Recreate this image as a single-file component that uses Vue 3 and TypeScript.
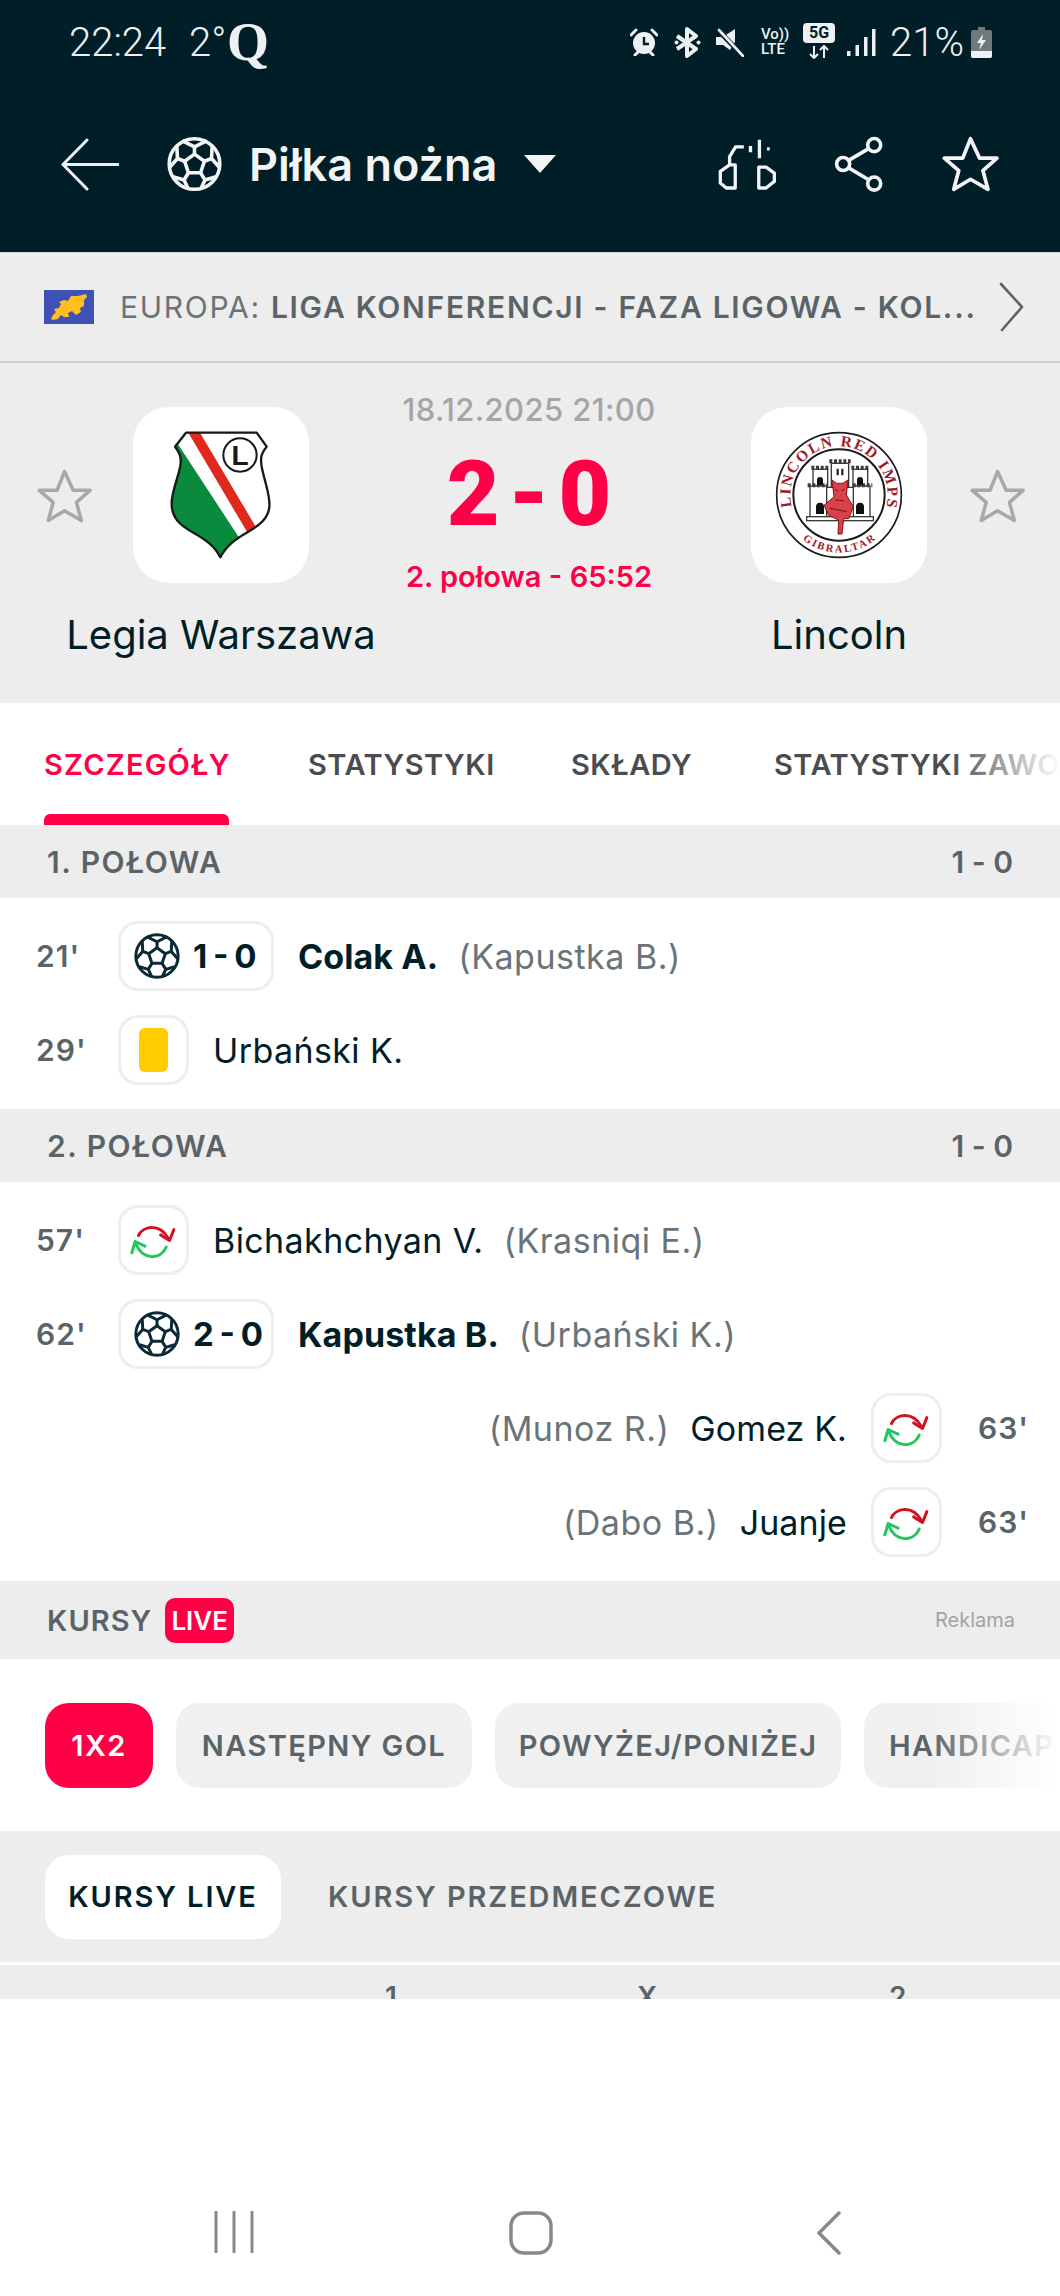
<script setup lang="ts">
type Side = 'left' | 'right'
type Kind = 'goal' | 'card' | 'sub'
interface MatchEvent { time: string; kind: Kind; side: Side; name: string; assist?: string; score?: string }
interface Section { title: string; score: string; events: MatchEvent[] }

const sections: Section[] = [
  {
    title: '1. POŁOWA',
    score: '1 - 0',
    events: [
      { time: "21'", kind: 'goal', side: 'left', score: '1 - 0', name: 'Colak A.', assist: '(Kapustka B.)' },
      { time: "29'", kind: 'card', side: 'left', name: 'Urbański K.' },
    ],
  },
  {
    title: '2. POŁOWA',
    score: '1 - 0',
    events: [
      { time: "57'", kind: 'sub', side: 'left', name: 'Bichakhchyan V.', assist: '(Krasniqi E.)' },
      { time: "62'", kind: 'goal', side: 'left', score: '2 - 0', name: 'Kapustka B.', assist: '(Urbański K.)' },
      { time: "63'", kind: 'sub', side: 'right', name: 'Gomez K.', assist: '(Munoz R.)' },
      { time: "63'", kind: 'sub', side: 'right', name: 'Juanje', assist: '(Dabo B.)' },
    ],
  },
]
const markets: string[] = ['NASTĘPNY GOL', 'POWYŻEJ/PONIŻEJ', 'HANDICAP']
</script>

<template>
  <div class="page">
    <svg class="defs" aria-hidden="true">
      <symbol id="ball" viewBox="0 0 100 100">
        <g fill="none" stroke="currentColor" stroke-width="6.500" stroke-linejoin="round" stroke-linecap="round">
          <circle cx="50" cy="50" r="46" />
          <path d="M50 32 68 45 61 66H39L32 45Z" />
          <path d="M50 32V19M68 45 81 40M61 66 69 79M39 66 31 79M32 45 19 40" />
          <path d="M30 9 50 19 70 9M81 40 82 19M81 40 95 56M69 79 86 74M69 79 62 94M31 79 38 94M31 79 14 74M19 40 5 56M19 40 18 19" />
        </g>
      </symbol>
      <symbol id="star" viewBox="0 0 170 165">
        <path d="M85 7 112 65 164 65 122 102 137 158 85 128 35 158 50 102 7 65 62 65Z" fill="none" stroke="currentColor" stroke-width="11" stroke-linejoin="round" />
      </symbol>
      <symbol id="sub" viewBox="60 80 150 130">
        <g fill="none" stroke-width="9" stroke-linecap="round" stroke-linejoin="round">
          <path d="M88 130C100 103 150 90 178 138" stroke="#d2131f" />
          <path d="M155 128 182 145 195 112" stroke="#d2131f" />
          <path d="M172 165C155 205 100 205 80 155" stroke="#22c55e" />
          <path d="M68 182 78 148 108 162" stroke="#22c55e" />
        </g>
      </symbol>
    </svg>

    <header class="top">
      <div class="status">
        <span class="clock">22:24</span>
        <span class="temp">2°</span>
        <span class="q">Q</span>
        <span class="status-spacer"></span>
        <svg class="s-alarm" width="28" height="28" viewBox="0 0 28 28">
          <circle cx="14" cy="15" r="11" fill="#eef1f3" />
          <path d="M14 9v7h5" fill="none" stroke="#001e28" stroke-width="2.4" />
          <path d="M1 7 6 2M27 7 22 2M5 27l3-3M23 27l-3-3" stroke="#eef1f3" stroke-width="3" stroke-linecap="round" />
        </svg>
        <svg class="s-bt" width="27" height="31" viewBox="0 0 27 31">
          <path d="M3 9 22 22 13 29V2L22 9 3 22" fill="none" stroke="#eef1f3" stroke-width="4" stroke-linejoin="round" />
          <circle cx="2.500" cy="15.500" r="2" fill="#eef1f3" />
          <circle cx="24.500" cy="15.500" r="2" fill="#eef1f3" />
        </svg>
        <svg class="s-mute" width="29" height="29" viewBox="0 0 29 29">
          <path d="M1 9H8L20 1V14L15 22 8 17H1Z" fill="#eef1f3" />
          <path d="M2 1 28 28" stroke="#001e28" stroke-width="5" />
          <path d="M4 2 28 28" stroke="#eef1f3" stroke-width="2.600" stroke-linecap="round" />
        </svg>
        <span class="s-volte"><span>Vo))</span><span>LTE</span></span>
        <span class="s-5g"><span class="s-5g-box">5G</span>
          <svg width="22" height="14" viewBox="0 0 22 14">
            <path d="M6 1v12M2 9l4 4 4-4M16 13V1M12 5l4-4 4 4" fill="none" stroke="#eef1f3" stroke-width="2" />
          </svg>
        </span>
        <svg class="s-signal" width="29" height="29" viewBox="0 0 29 29">
          <rect x="0" y="23" width="3.500" height="5" fill="#eef1f3" />
          <rect x="8.500" y="17" width="3.500" height="11" fill="#eef1f3" />
          <rect x="17" y="9" width="3.500" height="19" fill="#eef1f3" />
          <rect x="25" y="1" width="3.500" height="27" fill="#eef1f3" />
        </svg>
        <span class="pct">21%</span>
        <svg class="s-batt" width="21" height="31" viewBox="0 0 21 31">
          <path d="M7 0h7v3h5a2 2 0 0 1 2 2v24a2 2 0 0 1-2 2H2a2 2 0 0 1-2-2V5a2 2 0 0 1 2-2h5Z" fill="#6f787d" />
          <path d="M0 24H21V29a2 2 0 0 1-2 2H2a2 2 0 0 1-2-2Z" fill="#eef1f3" />
          <path d="M12 7 6 16H10L8 23 15 13H11Z" fill="#eef1f3" />
        </svg>
      </div>
      <nav class="bar">
        <svg class="back" width="59" height="53" viewBox="0 0 59 53">
          <path d="M27 2 3 26.500 27 51M3 26.500H58" fill="none" stroke="#eef1f3" stroke-width="3" stroke-linecap="round" stroke-linejoin="round" />
        </svg>
        <svg class="title-ball" width="55" height="56"><use href="#ball" /></svg>
        <span class="title">Piłka nożna</span>
        <span class="caret"></span>
        <span class="bar-spacer"></span>
        <svg class="act-lineup" width="58" height="52" viewBox="360 410 175 155">
          <path d="M395 490V465L413 436H438M458 433V452M485 414V470M508 442H516M395 490 367 510V545L385 560H412V490ZM483 497V560H505L530 540V515L505 497Z" fill="none" stroke="#f2f4f5" stroke-width="10" stroke-linejoin="round" />
        </svg>
        <svg class="act-share" width="49" height="56" viewBox="705 408 150 170">
          <g fill="none" stroke="#f2f4f5" stroke-width="11">
            <circle cx="828" cy="435" r="20" />
            <circle cx="733" cy="493" r="20" />
            <circle cx="828" cy="553" r="20" />
            <path d="M750 482 811 446M750 505 811 541" />
          </g>
        </svg>
        <svg class="act-star" width="57" height="56"><use href="#star" /></svg>
      </nav>
    </header>

    <div class="crumb">
      <svg class="flag" width="50" height="34" viewBox="0 0 50 34">
        <rect width="50" height="34" fill="#3f51b5" />
        <path d="M7 29 9 25 12 22 10 19 15 18 17 14 15 12 20 10 24 11 27 6 34 6 38 5 42 4 43 7 40 10 40 16 36 18 37 22 32 25 28 21 24 23 25 27 20 27 17 25 14 29 9 30Z" fill="#ffc01f" />
      </svg>
      <span class="crumb-text">EUROPA: <b>LIGA KONFERENCJI - FAZA LIGOWA - KOL...</b></span>
      <svg class="crumb-chev" width="25" height="50" viewBox="0 0 25 50">
        <path d="M2 2 23 25 3 48" fill="none" stroke="#5a6468" stroke-width="2.600" stroke-linecap="round" stroke-linejoin="round" />
      </svg>
    </div>

    <section class="match">
      <svg class="fav" width="55" height="54"><use href="#star" /></svg>
      <div class="team">
        <div class="logo">
          <svg width="176" height="176" viewBox="39 51 528 528">
            <defs>
              <clipPath id="shield">
                <path d="M198 128H410L440 170C425 190 420 200 425 230 435 280 452 320 448 350 445 385 420 405 385 425 350 445 320 465 301 502 285 470 260 450 215 425 180 405 155 385 155 340 155 300 180 250 182 220 184 195 175 185 165 170Z" />
              </clipPath>
            </defs>
            <g clip-path="url(#shield)">
              <rect x="150" y="120" width="310" height="390" fill="#fff" />
              <path d="M150 150 172 160 362 450 300 510H150Z" fill="#0a8a3c" />
              <path d="M205 128H240L410 415 385 432Z" fill="#e0281c" />
            </g>
            <path d="M198 128H410L440 170C425 190 420 200 425 230 435 280 452 320 448 350 445 385 420 405 385 425 350 445 320 465 301 502 285 470 260 450 215 425 180 405 155 385 155 340 155 300 180 250 182 220 184 195 175 185 165 170Z" fill="none" stroke="#16181a" stroke-width="7" stroke-linejoin="round" />
            <circle cx="360" cy="195" r="50" fill="#fff" stroke="#16181a" stroke-width="6" />
            <text x="360" y="224" class="crest-l">L</text>
          </svg>
        </div>
        <div class="team-name">Legia Warszawa</div>
      </div>
      <div class="center">
        <div class="date">18.12.2025 21:00</div>
        <div class="score">2-0</div>
        <div class="live">2. połowa - 65:52</div>
      </div>
      <div class="team team-right">
        <div class="logo">
          <svg width="176" height="176" viewBox="33 21 528 528">
            <defs>
              <path id="ring-top" d="M160 335A146 146 0 1 1 434 335" />
              <path id="ring-bot" d="M186 417A172 172 0 0 0 408 417" />
            </defs>
            <circle cx="297" cy="285" r="187" fill="#fff" stroke="#1a1a1a" stroke-width="5" />
            <circle cx="297" cy="285" r="137" fill="#fff" stroke="#1a1a1a" stroke-width="6" />
            <text class="ring-text"><textPath href="#ring-top" startOffset="50%" text-anchor="middle" textLength="530">LINCOLN RED IMPS</textPath></text>
            <text class="ring-sub"><textPath href="#ring-bot" startOffset="50%" text-anchor="middle" textLength="236">GIBRALTAR</textPath></text>
            <g fill="#fff" stroke="#3a3a3a" stroke-width="4">
              <rect x="274" y="190" width="52" height="70" />
              <rect x="219" y="208" width="44" height="50" />
              <rect x="339" y="208" width="44" height="50" />
              <rect x="258" y="262" width="84" height="90" />
              <rect x="210" y="258" width="50" height="92" />
              <rect x="340" y="258" width="50" height="92" />
              <rect x="200" y="350" width="200" height="12" />
            </g>
            <g stroke="#3a3a3a" fill="none" stroke-width="12" stroke-dasharray="9 5">
              <path d="M268 184H332M214 203H268M334 203H388M203 256H262M338 256H397" />
            </g>
            <path d="M228 342V320a12 12 0 0 1 24 0V342ZM348 342V320a12 12 0 0 1 24 0V342ZM231 255V240a9 9 0 0 1 18 0V255ZM351 255V240a9 9 0 0 1 18 0V255ZM290 226V206H296V226ZM304 226V206H310V226Z" fill="#111" />
            <path d="M276 240 290 250H308L324 240 319 285 340 320 326 356H311L306 402 294 402 296 360 266 346 252 316 282 290Z" fill="#d9414b" stroke="#8c0f18" stroke-width="3" />
            <path d="M285 268 293 272M305 272 313 268M286 300 312 302M270 325 320 335" stroke="#7a0d15" stroke-width="3" />
          </svg>
        </div>
        <div class="team-name">Lincoln</div>
      </div>
      <svg class="fav" width="55" height="54"><use href="#star" /></svg>
    </section>

    <div class="tabs">
      <span class="tab tab-on">SZCZEGÓŁY</span>
      <span class="tab">STATYSTYKI</span>
      <span class="tab">SKŁADY</span>
      <span class="tab">STATYSTYKI ZAWODNIKÓW</span>
      <span class="tabs-fade"></span>
    </div>

    <template v-for="s in sections" :key="s.title">
      <div class="sec-head"><span>{{ s.title }}</span><span class="sec-score">{{ s.score }}</span></div>
      <div class="events">
        <div v-for="(e, i) in s.events" :key="i" class="row" :class="'row-' + e.side">
          <span class="time">{{ e.time }}</span>
          <span class="badge" :class="{ 'badge-goal': e.kind === 'goal' }">
            <template v-if="e.kind === 'goal'">
              <svg class="badge-ball" width="46" height="46"><use href="#ball" /></svg>
              <span class="badge-score">{{ e.score }}</span>
            </template>
            <span v-else-if="e.kind === 'card'" class="card"></span>
            <svg v-else width="50" height="43"><use href="#sub" /></svg>
          </span>
          <span class="who" :class="{ scorer: e.kind === 'goal' }">{{ e.name }}</span>
          <span v-if="e.assist" class="assist">{{ e.assist }}</span>
        </div>
      </div>
    </template>

    <div class="odds-head">
      <span class="odds-title">KURSY</span>
      <span class="live-tag">LIVE</span>
      <span class="ad">Reklama</span>
    </div>
    <div class="pills">
      <span class="pill pill-on">1X2</span>
      <span v-for="m in markets" :key="m" class="pill">{{ m }}</span>
      <span class="pills-fade"></span>
    </div>
    <div class="switch">
      <span class="sw sw-on">KURSY LIVE</span>
      <span class="sw">KURSY PRZEDMECZOWE</span>
    </div>
    <div class="cols"><span>1</span><span>X</span><span>2</span></div>

    <footer class="sysnav">
      <svg width="40" height="42" viewBox="0 0 40 42">
        <path d="M2 1V41M20 1V41M38 1V41" stroke="#85898c" stroke-width="3" stroke-linecap="round" />
      </svg>
      <svg class="sys-home" width="44" height="44" viewBox="0 0 44 44">
        <rect x="2" y="2" width="40" height="40" rx="13" fill="none" stroke="#85898c" stroke-width="3.500" />
      </svg>
      <svg width="26" height="44" viewBox="0 0 26 44">
        <path d="M23 2 3 22 23 42" fill="none" stroke="#85898c" stroke-width="3.500" stroke-linecap="round" stroke-linejoin="round" />
      </svg>
    </footer>
  </div>
</template>

<style>
html, body { margin: 0; background: #fff; }
</style>

<style scoped>
.page { width: 1060px; height: 2296px; overflow: hidden; display: flex; flex-direction: column; font-family: Inter, "Noto Sans", sans-serif; color: #001e28; background: #fff; }
.defs { position: absolute; width: 0; height: 0; }

.top { height: 252px; background: #001e28; color: #eef1f3; flex: none; }
.status { height: 84px; display: flex; align-items: center; padding: 0 68px 0 69px; font-family: Roboto, sans-serif; font-weight: 300; font-size: 40px; }
.clock { width: 120px; }
.temp { width: 38px; }
.q { font-family: "Liberation Serif", serif; font-weight: 700; font-size: 54px; line-height: 1; }
.status-spacer { flex: 1; }
.status svg { flex: none; }
.s-bt { margin-left: 16px; }
.s-mute { margin-left: 14px; }
.s-volte { margin-left: 17px; width: 30px; display: flex; flex-direction: column; font-family: Roboto, sans-serif; font-weight: 500; font-size: 15px; line-height: 15px; }
.s-5g { margin-left: 12px; width: 32px; display: flex; flex-direction: column; align-items: center; margin-top: -3px; }
.s-5g-box { width: 32px; height: 20px; background: #eef1f3; color: #001e28; border-radius: 4px; font-size: 16px; line-height: 20px; font-weight: 700; text-align: center; margin-bottom: 2px; }
.s-signal { margin-left: 12px; }
.pct { margin-left: 14px; width: 74px; }
.s-batt { margin-left: 7px; }

.bar { height: 168px; margin-top: -4px; display: flex; align-items: center; padding: 0 61px 0 60px; box-sizing: border-box; }
.back { flex: none; }
.title-ball { margin-left: 48px; flex: none; color: #f2f4f5; }
.title { margin-left: 27px; font-size: 45px; font-weight: 600; color: #f2f4f5; white-space: nowrap; }
.caret { margin-left: 27px; width: 0; height: 0; border-left: 16px solid transparent; border-right: 16px solid transparent; border-top: 18px solid #f2f4f5; }
.bar-spacer { flex: 1; }
.act-lineup { flex: none; }
.act-share { margin-left: 58px; flex: none; }
.act-star { margin-left: 59px; flex: none; color: #f2f4f5; }

.crumb { height: 111px; box-sizing: border-box; flex: none; background: #ededed; border-top: 1px solid #cfdbe0; border-bottom: 2px solid #cfcfcf; display: flex; align-items: center; padding: 0 36px 0 44px; }
.flag { flex: none; }
.crumb-text { margin-left: 26px; font-size: 30px; letter-spacing: 1.7px; color: #6a7478; white-space: nowrap; flex: 1; overflow: hidden; }
.crumb-text b { font-weight: 600; color: #5a6468; }
.crumb-chev { flex: none; }

.match { height: 340px; box-sizing: border-box; flex: none; background: #ededed; display: flex; align-items: flex-start; padding: 44px 35px 0 37px; color: #a8a8a8; }
.fav { margin-top: 62px; flex: none; }
.team { width: 258px; display: flex; flex-direction: column; align-items: center; flex: none; }
.team-right { width: 262px; }
.logo { width: 176px; height: 176px; background: #fff; border-radius: 36px; overflow: hidden; }
.logo svg { display: block; }
.crest-l { font-family: "Liberation Sans", sans-serif; font-weight: 700; font-size: 84px; text-anchor: middle; fill: #16181a; }
.ring-text { font-family: "Liberation Serif", serif; font-weight: 700; font-size: 46px; fill: #a11a22; }
.ring-sub { font-family: "Liberation Serif", serif; font-weight: 700; font-size: 32px; fill: #a11a22; }
.team-name { margin-top: 28px; font-size: 40px; line-height: 48px; color: #001e28; white-space: nowrap; }
.center { flex: 1; display: flex; flex-direction: column; align-items: center; }
.date { margin-top: -17px; font-size: 31px; line-height: 40px; font-weight: 500; letter-spacing: .4px; color: #a5a5a5; white-space: nowrap; }
.score { margin-top: 22px; font-family: Roboto, sans-serif; font-size: 91px; line-height: 84px; font-weight: 900; color: #ff0046; letter-spacing: 9px; padding-left: 9px; }
.live { margin-top: 21px; font-size: 29px; line-height: 40px; font-weight: 600; color: #ff0046; white-space: nowrap; }

.tabs { position: relative; height: 122px; flex: none; display: grid; grid-template-columns: 185px 184px 124px max-content; column-gap: 79px; padding-left: 44px; overflow: hidden; white-space: nowrap; }
.tab { display: flex; align-items: center; height: 122px; font-size: 29px; font-weight: 600; color: #4a4c50; position: relative; letter-spacing: .5px; }
.tab-on { color: #ff0046; letter-spacing: 1.2px; }
.tab-on::after { content: ""; position: absolute; left: 0; right: 0; bottom: 0; height: 11px; background: #ff0046; border-radius: 6px 6px 0 0; }
.tabs-fade { position: absolute; right: 0; top: 0; bottom: 0; width: 110px; background: linear-gradient(90deg, rgba(255,255,255,0), #fff); }

.sec-head { height: 73px; box-sizing: border-box; flex: none; background: #ededed; display: flex; justify-content: space-between; align-items: center; padding: 0 46px 0 47px; font-size: 30px; font-weight: 600; color: #5a6468; letter-spacing: 1.5px; }
.sec-score { word-spacing: -2px; letter-spacing: 1px; }
.events { padding: 11px 0 12px; flex: none; }
.row { height: 94px; display: flex; align-items: center; padding: 0 36px; }
.row-right { flex-direction: row-reverse; }
.time { font-size: 30px; font-weight: 600; color: #5a6468; width: 82px; flex: none; letter-spacing: 1px; }
.row-right .time { width: 46px; margin-left: 36px; }
.badge { height: 70px; width: 71px; box-sizing: border-box; border: 3px solid #eeeeee; border-radius: 20px; display: flex; align-items: center; justify-content: center; flex: none; }
.badge-goal { width: 156px; justify-content: flex-start; }
.badge-ball { margin-left: 13px; color: #0b2a35; flex: none; }
.badge-score { margin-left: 13px; font-size: 33px; font-weight: 700; color: #001e28; white-space: nowrap; word-spacing: -2px; }
.card { width: 29px; height: 44px; background: #ffcd00; border-radius: 6px; }
.who { margin-left: 24px; font-size: 34px; letter-spacing: .4px; white-space: nowrap; color: #001e28; }
.row-right .who { margin-left: 0; margin-right: 24px; letter-spacing: .1px; }
.scorer { font-weight: 700; letter-spacing: .1px; }
.assist { margin-left: 20px; font-size: 34px; letter-spacing: .5px; white-space: nowrap; color: #6a7478; }
.row-right .assist { margin-left: 0; margin-right: 21px; }

.odds-head { height: 78px; flex: none; box-sizing: border-box; background: #ededed; display: flex; align-items: center; padding: 0 45px 0 47px; }
.odds-title { font-size: 29px; font-weight: 600; color: #5a6468; letter-spacing: 1px; }
.live-tag { margin-left: 13px; width: 69px; height: 45px; background: #ff0046; color: #fff; border-radius: 10px; font-size: 26px; font-weight: 600; line-height: 45px; text-align: center; }
.ad { margin-left: auto; font-size: 20px; color: #a0a4a6; }

.pills { position: relative; height: 172px; flex: none; display: flex; align-items: center; gap: 23px; padding-left: 45px; overflow: hidden; white-space: nowrap; }
.pill { height: 85px; box-sizing: border-box; flex: none; display: flex; align-items: center; justify-content: center; padding: 0 25px; background: #f0f0f0; border-radius: 24px; font-size: 29px; font-weight: 600; color: #5a6468; letter-spacing: 1.4px; }
.pill:nth-child(1) { width: 108px; }
.pill:nth-child(2) { width: 296px; }
.pill:nth-child(3) { width: 346px; }
.pill-on { background: #ff0046; color: #fff; }
.pills-fade { position: absolute; right: 0; top: 0; bottom: 0; width: 130px; background: linear-gradient(90deg, rgba(255,255,255,0), #fff); }

.switch { height: 131px; flex: none; background: #ededed; display: flex; align-items: center; padding-left: 45px; gap: 47px; border-bottom: 3px solid #fff; }
.sw { font-size: 29px; font-weight: 600; color: #5a6468; letter-spacing: 1.9px; white-space: nowrap; }
.sw-on { height: 84px; width: 236px; box-sizing: border-box; background: #fff; border-radius: 24px; display: flex; align-items: center; justify-content: center; color: #001e28; }
.cols { height: 34px; flex: none; overflow: hidden; background: #ededed; display: flex; font-size: 28px; font-weight: 600; color: #5a6468; padding-left: 385px; }
.cols span { width: 252px; flex: none; line-height: 64px; }

.sysnav { margin-top: auto; flex: none; height: 85px; box-sizing: border-box; padding: 0 218px 0 214px; display: flex; justify-content: space-between; align-items: flex-start; }
.sys-home { margin-right: 8px; }
</style>
